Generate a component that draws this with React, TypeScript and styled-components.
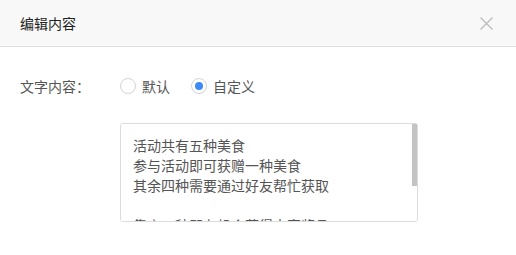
import React, { useState } from "react";
import styled, { createGlobalStyle } from "styled-components";

const GlobalStyle = createGlobalStyle`
  html, body {
    margin: 0;
    padding: 0;
    background: #fff;
    font-family: "Noto Sans CJK SC", "Noto Sans", sans-serif;
  }
`;

// ====== Styled Components ======
const Dialog = styled.div`
  width: 516px;
  height: 255px;
  background: #fff;
  overflow: hidden;
`;

const Header = styled.div`
  height: 47px;
  display: flex;
  align-items: center;
  justify-content: space-between;
  padding: 0 23px 0 20px;
  background: #f8f8f8;
  border-bottom: 1px solid #e0e0e0;
  box-sizing: border-box;
`;

const Title = styled.h3`
  margin: 0;
  font-size: 14px;
  font-weight: normal;
  color: #222;
  line-height: 1;
`;

const CloseButton = styled.button`
  width: 13px;
  height: 13px;
  padding: 0;
  border: 0;
  background: none;
  cursor: pointer;
  display: flex;
`;

const Body = styled.div`
  padding: 23px 20px 0;
  display: flex;
  flex-direction: column;
`;

const FormRow = styled.div<{ top?: number }>`
  display: flex;
  align-items: center;
  margin-top: ${({ top }) => top ?? 0}px;
`;

const Label = styled.span`
  width: 100px;
  font-size: 14px;
  color: #555;
  line-height: 32px;
`;

const Spacer = styled.span`
  width: 100px;
`;

const RadioGroup = styled.div`
  display: flex;
  align-items: center;
  gap: 21px;
`;

const RadioLabel = styled.label`
  display: flex;
  align-items: center;
  gap: 6px;
  font-size: 14px;
  color: #555;
  cursor: pointer;
`;

const RadioInput = styled.input`
  appearance: none;
  margin: 0;
  width: 16px;
  height: 16px;
  border: 1px solid #d4d4d4;
  border-radius: 50%;
  box-sizing: border-box;
  display: grid;
  place-items: center;
  cursor: pointer;

  &::after {
    content: "";
    width: 8px;
    height: 8px;
    border-radius: 50%;
    background: transparent;
  }
  &:checked::after {
    background: #3e8af7;
  }
`;

const TextBox = styled.div`
  position: relative;
  width: 298px;
  height: 99px;
`;

const TextArea = styled.textarea`
  width: 100%;
  height: 100%;
  box-sizing: border-box;
  margin: 0;
  padding: 11px 12px;
  border: 1px solid #dcdcdc;
  border-radius: 3px;
  font-family: "Noto Sans CJK SC", "Noto Sans", sans-serif;
  font-size: 14px;
  line-height: 20px;
  color: #555;
  resize: none;
  outline: none;
  overflow-y: auto;
  scrollbar-width: none;

  &::-webkit-scrollbar {
    display: none;
  }
`;

/* 스크롤바 thumb (headless에서 기본 스크롤바가 안 보여서 직접 그림) */
const ScrollThumb = styled.div`
  position: absolute;
  top: 1px;
  right: 1px;
  width: 5px;
  background: #c4c4c4;
  pointer-events: none;
`;

const defaultText = [
  "活动共有五种美食",
  "参与活动即可获赠一种美食",
  "其余四种需要通过好友帮忙获取",
  "",
  "集齐五种即有机会获得丰富奖品",
  "快来参与吧！",
].join("\n");

const App: React.FC = () => {
  const [mode, setMode] = useState<"default" | "custom">("custom");
  const [text, setText] = useState(defaultText);
  const [thumb, setThumb] = useState({ top: 0, height: 62 });

  const handleScroll = (e: React.UIEvent<HTMLTextAreaElement>) => {
    const el = e.currentTarget;
    const track = el.clientHeight;
    const height = Math.max(20, (track * track) / el.scrollHeight);
    const top = (el.scrollTop / el.scrollHeight) * track;
    setThumb({ top, height });
  };

  return (
    <Dialog>
      <GlobalStyle />
      <Header>
        <Title>编辑内容</Title>
        <CloseButton aria-label="关闭">
          <svg width="13" height="13" viewBox="0 0 13 13">
            <path d="M0.5 0.5L12.5 12.5M12.5 0.5L0.5 12.5" stroke="#bdbdbd" strokeWidth="1.4" fill="none" />
          </svg>
        </CloseButton>
      </Header>
      <Body>
        <FormRow>
          <Label>文字内容：</Label>
          <RadioGroup>
            <RadioLabel>
              <RadioInput
                type="radio"
                name="mode"
                checked={mode === "default"}
                onChange={() => setMode("default")}
              />
              默认
            </RadioLabel>
            <RadioLabel>
              <RadioInput
                type="radio"
                name="mode"
                checked={mode === "custom"}
                onChange={() => setMode("custom")}
              />
              自定义
            </RadioLabel>
          </RadioGroup>
        </FormRow>
        <FormRow top={21}>
          <Spacer />
          <TextBox>
            <TextArea
              value={text}
              onChange={(e) => setText(e.target.value)}
              onScroll={handleScroll}
            />
            <ScrollThumb style={{ top: thumb.top + 1, height: thumb.height }} />
          </TextBox>
        </FormRow>
      </Body>
    </Dialog>
  );
};

export default App;
